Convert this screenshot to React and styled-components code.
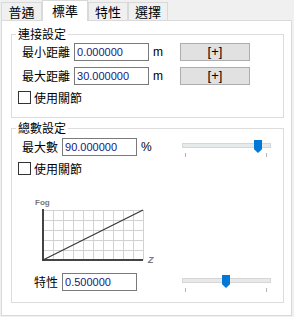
import styled, { createGlobalStyle } from "styled-components"

const GlobalStyle = createGlobalStyle`
  html, body {
    margin: 0;
    padding: 0;
    background: #f0f0f0;
  }
  body {
    font-family: "Noto Sans CJK TC", "Noto Sans", sans-serif;
    font-size: 12px;
    color: #000;
  }
`

const Window = styled.div`
  width: 294px;
  height: 317px;
  box-sizing: border-box;
  padding-left: 1px;
  background: #f0f0f0;
`

const Tabs = styled.div`
  display: flex;
  align-items: flex-end;
  height: 20px;
  position: relative;
  z-index: 1;
`

const Tab = styled.div`
  width: ${(p) => p.$w}px;
  height: ${(p) => (p.$active ? 21 : 18)}px;
  margin-bottom: ${(p) => (p.$active ? -1 : 0)}px;
  box-sizing: border-box;
  border: 1px solid #d9d9d9;
  border-bottom: none;
  background: ${(p) => (p.$active ? "#fff" : "#f0f0f0")};
  display: flex;
  align-items: center;
  justify-content: center;
  font-size: 13px;
  line-height: 15px;
  padding-bottom: ${(p) => (p.$active ? 2 : 0)}px;
`

const Panel = styled.div`
  width: 291px;
  box-sizing: border-box;
  border: 1px solid #d9d9d9;
  background: #fff;
  padding: 13px 7px 12px 9px;
`

const Group = styled.div`
  position: relative;
  border: 1px solid #dcdcdc;
  margin-top: ${(p) => p.$mt || 0}px;
  padding: ${(p) => p.$pt}px 0 ${(p) => p.$pb}px 6px;
`

const GroupTitle = styled.span`
  position: absolute;
  top: -8px;
  left: 4px;
  padding: 0 2px;
  background: #fff;
  line-height: 14px;
`

const Row = styled.div`
  display: flex;
  align-items: flex-start;
  height: 18px;
  padding-left: ${(p) => p.$indent}px;
  margin-top: ${(p) => p.$mt || 0}px;
`

const Label = styled.span`
  align-self: center;
  line-height: 14px;
  margin-right: 4px;
  white-space: nowrap;
`

const Field = styled.input`
  width: 75px;
  height: 18px;
  box-sizing: border-box;
  margin: 0;
  border: 1px solid #7a7a7a;
  padding: 0 2px;
  background: #fff;
  font-family: "Liberation Sans", Arial, sans-serif;
  font-size: 11px;
  color: #16207a;
  outline: none;
`

const Unit = styled.span`
  width: ${(p) => p.$w}px;
  box-sizing: border-box;
  padding-left: 4px;
  align-self: center;
  font-family: "Liberation Sans", Arial, sans-serif;
  font-size: 12px;
  line-height: 14px;
`

const AddButton = styled.button`
  width: 70px;
  height: 18px;
  margin: 0;
  padding: 0;
  box-sizing: border-box;
  border: 1px solid #adadad;
  background: #e1e1e1;
  font-family: "Liberation Sans", Arial, sans-serif;
  font-size: 13px;
  line-height: 14px;
  color: #000;
`

const CheckRow = styled.label`
  display: flex;
  align-items: center;
  gap: 3px;
  height: 13px;
  margin-top: ${(p) => p.$mt}px;
  line-height: 14px;
`

const Box = styled.span`
  width: 13px;
  height: 13px;
  box-sizing: border-box;
  border: 1px solid #333;
  background: #fff;
`

const Chart = styled.div`
  margin-top: 15px;
  padding-left: 17px;
  height: 78px;
`

const SliderWrap = styled.div`
  position: relative;
  width: 89px;
  height: 18px;
  margin-top: 2px;
`

const Track = styled.div`
  position: absolute;
  top: 3px;
  left: 0;
  right: 0;
  height: 5px;
  box-sizing: border-box;
  border: 1px solid #d6d6d6;
  background: #e7eaea;
`

const Thumb = styled.div`
  position: absolute;
  top: 0;
  width: 8px;
  height: 13px;
  background: #0078d7;
  clip-path: polygon(0 0, 100% 0, 100% 72%, 50% 100%, 0 72%);
`

const Tick = styled.div`
  position: absolute;
  top: 13px;
  width: 1px;
  height: 4px;
  background: #b4b4b4;
`

function Slider({ value }) {
  const center = 3 + value * 81
  return (
    <SliderWrap>
      <Track />
      <Tick style={{ left: 3 }} />
      <Tick style={{ left: 84 }} />
      <Thumb style={{ left: Math.round(center - 4) }} />
    </SliderWrap>
  )
}

function FogChart() {
  const left = 8
  const right = 108
  const top = 20
  const bottom = 70
  const cols = Array.from({ length: 10 }, (_, i) => left + 10 * (i + 1))
  const rows = Array.from({ length: 5 }, (_, i) => top + 10 * i)
  return (
    <svg width="125" height="78" viewBox="0 0 125 78">
      {cols.map((x) => (
        <line key={"c" + x} x1={x + 0.5} y1={top} x2={x + 0.5} y2={bottom} stroke="#d2d2d2" strokeWidth="1" />
      ))}
      {rows.map((y) => (
        <line key={"r" + y} x1={left} y1={y + 0.5} x2={right} y2={y + 0.5} stroke="#d2d2d2" strokeWidth="1" />
      ))}
      <line x1={left} y1={top - 1} x2={left} y2={bottom + 1} stroke="#444" strokeWidth="2" />
      <line x1={left - 1} y1={bottom} x2={right} y2={bottom} stroke="#444" strokeWidth="2" />
      <line x1={left} y1={bottom} x2={right} y2={top} stroke="#333" strokeWidth="1.2" />
      <text x="0" y="15" fontFamily="Liberation Sans, Arial, sans-serif" fontSize="8" fontWeight="bold" fill="#777">
        Fog
      </text>
      <text x="113" y="73" fontFamily="Liberation Sans, Arial, sans-serif" fontSize="9" fontWeight="bold" fontStyle="italic" fill="#777">
        Z
      </text>
    </svg>
  )
}

const tabs = [
  { name: "普通", w: 41 },
  { name: "標準", w: 46, active: true },
  { name: "特性", w: 40 },
  { name: "選擇", w: 40 },
]

export default function App() {
  return (
    <>
      <GlobalStyle />
      <Window>
        <Tabs>
          {tabs.map((t) => (
            <Tab key={t.name} $w={t.w} $active={t.active}>
              {t.name}
            </Tab>
          ))}
        </Tabs>
        <Panel>
          <Group $pt={8} $pb={13}>
            <GroupTitle>連接設定</GroupTitle>
            <Row $indent={4}>
              <Label>最小距離</Label>
              <Field readOnly value="0.000000" />
              <Unit $w={31}>m</Unit>
              <AddButton>[+]</AddButton>
            </Row>
            <Row $indent={4} $mt={6}>
              <Label>最大距離</Label>
              <Field readOnly value="30.000000" />
              <Unit $w={31}>m</Unit>
              <AddButton>[+]</AddButton>
            </Row>
            <CheckRow $mt={6}>
              <Box />
              使用關節
            </CheckRow>
          </Group>
          <Group $mt={10} $pt={9} $pb={11}>
            <GroupTitle>總數設定</GroupTitle>
            <Row $indent={4}>
              <Label>最大數</Label>
              <Field readOnly value="90.000000" />
              <Unit $w={45}>%</Unit>
              <Slider value={0.9} />
            </Row>
            <CheckRow $mt={6}>
              <Box />
              使用關節
            </CheckRow>
            <Chart>
              <FogChart />
            </Chart>
            <Row $indent={16} $mt={5}>
              <Label>特性</Label>
              <Field readOnly value="0.500000" />
              <Unit $w={45} />
              <Slider value={0.5} />
            </Row>
          </Group>
        </Panel>
      </Window>
    </>
  )
}
